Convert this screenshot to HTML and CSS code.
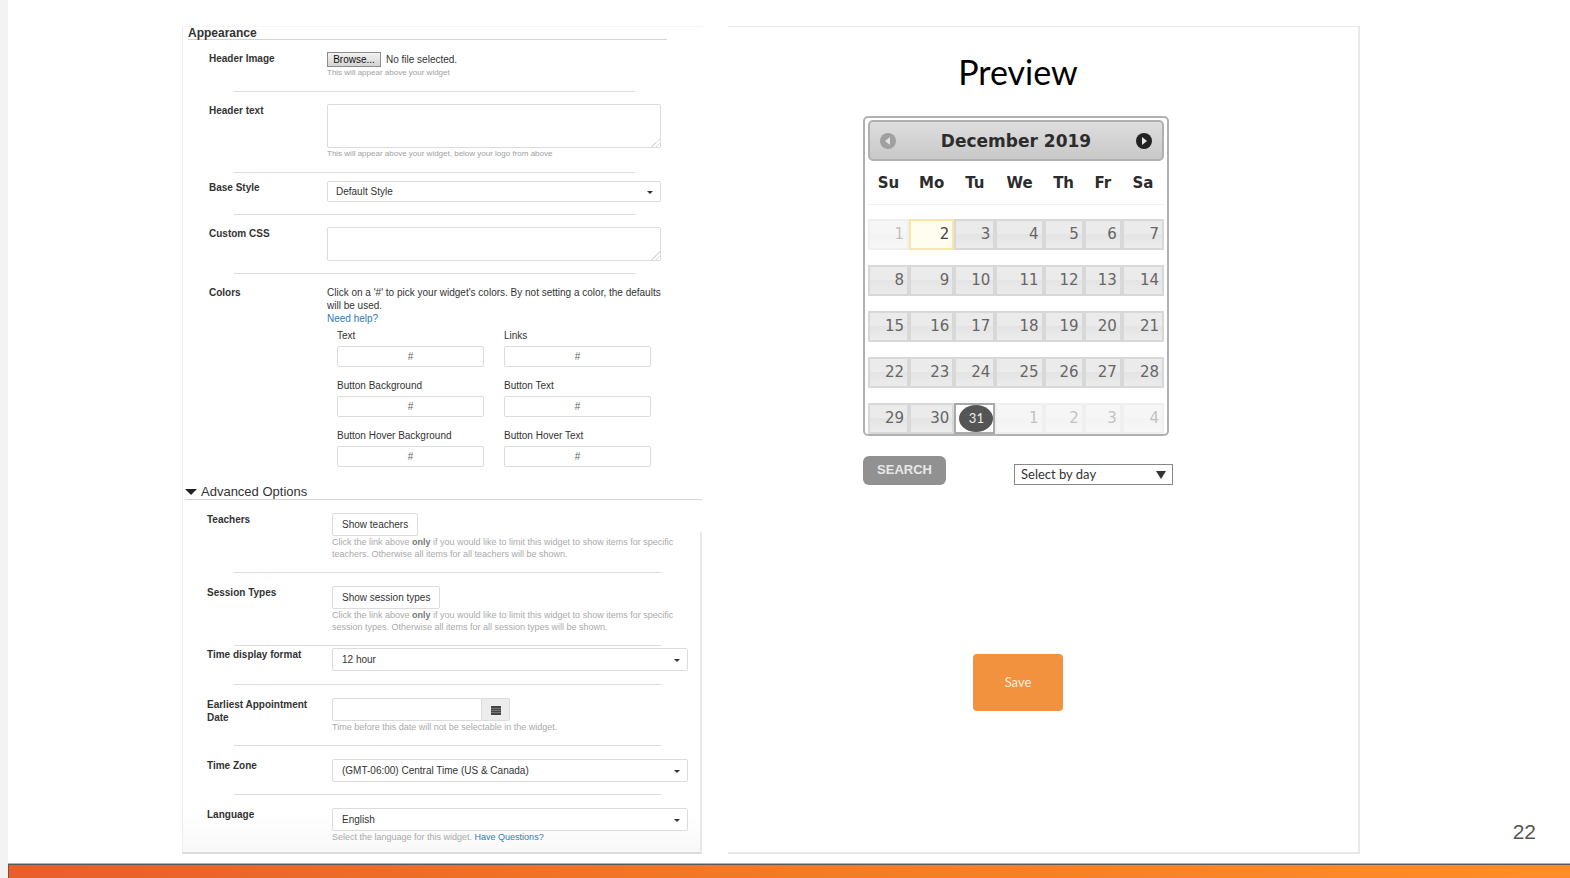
FILE: index.html
```html
<!DOCTYPE html>
<html lang="en">
<head>
<meta charset="utf-8">
<title>Widget settings</title>
<link rel="stylesheet" href="styles.css">
</head>
<body>
<div class="slide">
  <main class="stage">
    <form class="settings">
      <section class="appearance">
        <h2 class="section-title">Appearance</h2>
        <div class="row">
          <label class="name" for="header-image">Header Image</label>
          <div class="file">
            <span class="browse">Browse...</span><span>No file selected.</span>
            <input id="header-image" type="file">
          </div>
          <p class="help">This will appear above your widget</p>
        </div>
        <hr>
        <div class="row">
          <label class="name" for="header-text">Header text</label>
          <textarea id="header-text" class="area tall"></textarea>
          <p class="help">This will appear above your widget, below your logo from above</p>
        </div>
        <hr>
        <div class="row tight">
          <label class="name" for="base-style">Base Style</label>
          <div class="select"><select id="base-style"><option>Default Style</option></select></div>
        </div>
        <hr>
        <div class="row">
          <label class="name" for="custom-css">Custom CSS</label>
          <textarea id="custom-css" class="area"></textarea>
        </div>
        <hr>
        <div class="row colors-row">
          <span class="name">Colors</span>
          <div>
            <p class="intro">Click on a '#' to pick your widget's colors. By not setting a color, the defaults will be used.<br><a href="#">Need help?</a></p>
            <div class="colors">
              <label>Text<input type="text" placeholder="#"></label>
              <label>Links<input type="text" placeholder="#"></label>
              <label>Button Background<input type="text" placeholder="#"></label>
              <label>Button Text<input type="text" placeholder="#"></label>
              <label>Button Hover Background<input type="text" placeholder="#"></label>
              <label>Button Hover Text<input type="text" placeholder="#"></label>
            </div>
          </div>
        </div>
      </section>
      <section class="advanced">
        <h2 class="section-title"><svg width="12" height="6" viewBox="0 0 12 6"><path d="M0 0h12L6 6z" fill="#222"/></svg>Advanced Options</h2>
        <div class="fields">
          <div class="row">
            <span class="name">Teachers</span>
            <button class="plain" type="button">Show teachers</button>
            <p class="help">Click the link above <b>only</b> if you would like to limit this widget to show items for specific teachers. Otherwise all items for all teachers will be shown.</p>
          </div>
          <hr>
          <div class="row">
            <span class="name">Session Types</span>
            <button class="plain" type="button">Show session types</button>
            <p class="help">Click the link above <b>only</b> if you would like to limit this widget to show items for specific session types. Otherwise all items for all session types will be shown.</p>
          </div>
          <hr>
          <div class="row tight">
            <label class="name" for="time-format">Time display format</label>
            <div class="select"><select id="time-format"><option>12 hour</option></select></div>
          </div>
          <hr>
          <div class="row">
            <label class="name" for="earliest">Earliest Appointment Date</label>
            <div class="date">
              <input id="earliest" type="text">
              <button type="button" aria-label="Pick a date"><svg width="10" height="10" viewBox="0 0 10 10"><path d="M0 1h10v9H0z" fill="#444"/><path d="M0 3.5h10M0 5.5h10M0 7.5h10" stroke="#999" stroke-width=".6"/></svg></button>
            </div>
            <p class="help">Time before this date will not be selectable in the widget.</p>
          </div>
          <hr>
          <div class="row">
            <label class="name" for="time-zone">Time Zone</label>
            <div class="select"><select id="time-zone"><option>(GMT-06:00) Central Time (US &amp; Canada)</option></select></div>
          </div>
          <hr>
          <div class="row last">
            <label class="name" for="language">Language</label>
            <div class="select"><select id="language"><option>English</option></select></div>
            <p class="help">Select the language for this widget. <a href="#">Have Questions?</a></p>
          </div>
        </div>
      </section>
    </form>

    <section class="preview">
      <div class="preview-body">
        <h1>Preview</h1>
        <div class="calendar">
          <div class="month">
            <button type="button" aria-label="Previous month"><svg width="16" height="16" viewBox="0 0 16 16"><circle cx="8" cy="8" r="8" fill="#a0a0a0"/><path d="M10 4v8L5 8z" fill="#e2e2e2"/></svg></button>
            <strong>December 2019</strong>
            <button type="button" aria-label="Next month"><svg width="16" height="16" viewBox="0 0 16 16"><circle cx="8" cy="8" r="8" fill="#222"/><path d="M6 4v8l5-4z" fill="#e6e6e6"/></svg></button>
          </div>
          <table>
            <colgroup><col class="c1"><col class="c2"><col class="c1"><col class="c4"><col class="c5"><col class="c6"><col class="c7"></colgroup>
            <thead><tr><th>Su</th><th>Mo</th><th>Tu</th><th>We</th><th>Th</th><th>Fr</th><th>Sa</th></tr></thead>
            <tbody>
              <tr><td><button type="button" class="off">1</button></td><td><button type="button" class="today">2</button></td><td><button type="button">3</button></td><td><button type="button">4</button></td><td><button type="button">5</button></td><td><button type="button">6</button></td><td><button type="button">7</button></td></tr>
              <tr><td><button type="button">8</button></td><td><button type="button">9</button></td><td><button type="button">10</button></td><td><button type="button">11</button></td><td><button type="button">12</button></td><td><button type="button">13</button></td><td><button type="button">14</button></td></tr>
              <tr><td><button type="button">15</button></td><td><button type="button">16</button></td><td><button type="button">17</button></td><td><button type="button">18</button></td><td><button type="button">19</button></td><td><button type="button">20</button></td><td><button type="button">21</button></td></tr>
              <tr><td><button type="button">22</button></td><td><button type="button">23</button></td><td><button type="button">24</button></td><td><button type="button">25</button></td><td><button type="button">26</button></td><td><button type="button">27</button></td><td><button type="button">28</button></td></tr>
              <tr><td><button type="button">29</button></td><td><button type="button">30</button></td><td><button type="button" class="picked"><span>31</span></button></td><td><button type="button" class="off">1</button></td><td><button type="button" class="off">2</button></td><td><button type="button" class="off">3</button></td><td><button type="button" class="off">4</button></td></tr>
            </tbody>
          </table>
        </div>
        <div class="actions">
          <button class="search" type="button">SEARCH</button>
          <div class="day-select"><select aria-label="Select by day"><option>Select by day</option></select></div>
        </div>
        <button class="save" type="button">Save</button>
      </div>
    </section>
    <p class="page-number">22</p>
  </main>
  <footer class="band"></footer>
</div>
</body>
</html>
```
FILE: styles.css
```css
* { box-sizing: border-box; }
body {
  margin: 0;
  background: #f3f3f3;
  font: 10px/12px "Liberation Sans", Arial, sans-serif;
  color: #333;
}
h1, h2, p { margin: 0; }
button, input, select, textarea { font: inherit; color: inherit; margin: 0; }
a { color: #337ab7; text-decoration: none; }

.slide {
  min-height: 100vh;
  margin-left: 8px;
  background: #fff;
  display: flex;
  flex-direction: column;
}
.stage {
  flex: 1;
  display: grid;
  grid-template-columns: 174fr 520fr 26fr 632fr 210fr;
  padding: 26px 0 10px;
}
.band {
  height: 14px;
  border-top: 1px solid #5a5a5a;
  border-left: 1px solid #8a4a34;
  box-shadow: 0 -1px #b0b0b0;
  background: linear-gradient(90deg, #e85e2c, #f47a26 50%, #ff8d27);
}

/* Settings form */
.settings {
  grid-column: 2;
  border-left: 1px solid #ececec;
  border-bottom: 2px solid #dcdcdc;
  border-top: 1px solid #f6f6f6;
  background: linear-gradient(#fff 95%, #f8f8f8);
}
.appearance { margin: 0 35px 0 5px; }
.advanced { margin: 17px 0 0 2px; }
.section-title {
  font-size: 12px;
  line-height: 12px;
  border-bottom: 1px solid #d4d4d4;
}
.advanced .section-title {
  display: flex;
  align-items: center;
  gap: 4px;
  font-size: 13px;
  font-weight: normal;
  line-height: 15px;
}
.fields {
  padding-right: 14px;
  background: linear-gradient(#e8e8e8, #e8e8e8) no-repeat right 32px / 2px 100%;
}
.row {
  display: grid;
  grid-template-columns: 118px 1fr;
  padding: 12px 6px 12px 21px;
}
.row > * { grid-column: 2; }
.row > .name {
  grid-column: 1;
  grid-row: 1 / span 2;
  padding-right: 12px;
  font-weight: bold;
  line-height: 13px;
}
.row.tight { padding-top: 8px; }
.fields .row {
  grid-template-columns: 125px 1fr;
  padding: 13px 0 12px 22px;
}
.fields .row.tight { padding: 2px 0 13px 22px; }
.fields .row.last { padding-bottom: 8px; }
hr {
  border: 0;
  height: 1px;
  margin: 0 32px 0 46px;
  background: #dcdcdc;
}
.fields hr { margin: 0 27px 0 49px; }
.help { font-size: 8px; color: #a0a0a0; }
.fields .help { padding-right: 10px; font-size: 9px; color: #aaa; }
.help b { color: #777; }

.file { position: relative; display: flex; align-items: center; gap: 5px; }
.file input { position: absolute; inset: 0; width: 100%; opacity: 0; }
.browse {
  width: 54px;
  border: 1px solid #8c8c8c;
  background: linear-gradient(#f2f2f2, #d4d4d4);
  color: #111;
  text-align: center;
  line-height: 13px;
}
.area, .select select, .colors input, .date input, .plain {
  border: 1px solid #dcdcdc;
  border-radius: 2px;
  background: #fff;
}
.area { display: block; width: 100%; height: 34px; resize: vertical; }
.area.tall { height: 44px; }
.area::-webkit-resizer {
  background: linear-gradient(135deg, transparent 70%, #ddd 70% 75%, transparent 75% 85%, #ddd 85% 90%, transparent 90%);
}
.select { position: relative; }
.select select {
  display: block;
  width: 100%;
  height: 21px;
  padding: 0 8px;
  appearance: none;
}
.fields .select select { height: 23px; padding: 0 9px; }
.select::after, .day-select::after {
  content: "";
  position: absolute;
  right: 8px;
  top: calc(50% - 1px);
  border: 3px solid transparent;
  border-top-color: #333;
  border-bottom: 0;
  pointer-events: none;
}
.row.colors-row { padding-bottom: 0; }
.intro { line-height: 13px; }
.colors {
  display: grid;
  grid-template-columns: 1fr 1fr;
  gap: 13px 20px;
  margin: 5px 10px 0;
}
.colors input {
  display: block;
  width: 100%;
  height: 21px;
  margin-top: 4px;
  text-align: center;
}
.colors input::placeholder { color: #666; }
.plain { justify-self: start; height: 23px; padding: 0 9px; }
.date { display: flex; height: 23px; }
.date input { width: 150px; border-radius: 2px 0 0 2px; }
.date button {
  width: 28px;
  padding: 0;
  border: 1px solid #dcdcdc;
  border-left: 0;
  border-radius: 0 2px 2px 0;
  background: #ececec;
}
.date svg { display: block; margin: auto; }

/* Preview */
.preview {
  grid-column: 4;
  border: solid #e8e8e8;
  border-width: 1px 2px 2px 0;
  padding: 23px 0 0 135px;
}
.preview-body { width: 310px; }
h1 {
  font: 34px/44px Lato, sans-serif;
  color: #000;
  text-align: center;
}
.calendar {
  width: 306px;
  margin-top: 22px;
  padding: 2px 3px 0;
  border: 2px solid #b0b0b0;
  border-radius: 5px;
  font: 15px/18px "DejaVu Sans", sans-serif;
}
.month {
  display: flex;
  align-items: center;
  justify-content: space-between;
  height: 41px;
  padding: 0 10px;
  border: 2px solid #b0b0b0;
  border-radius: 5px;
  background: linear-gradient(#dedede, #c8c8c8);
  font-size: 17px;
  color: #2c2c2c;
}
.month button { padding: 0; border: 0; background: none; }
.month svg { display: block; }
.calendar table { width: 100%; table-layout: fixed; border-collapse: collapse; }
.c1 { width: 41px; }
.c2 { width: 45px; }
.c4 { width: 48px; }
.c5 { width: 40px; }
.c6 { width: 38px; }
.c7 { width: 42px; }
th { height: 43px; padding: 2px 0 0; border-bottom: 1px solid #f2f2f2; color: #2c2c2c; }
td { padding: 15px 0 0; }
tbody tr:first-child td { padding-top: 14px; }
td button {
  display: block;
  width: 100%;
  height: 31px;
  padding: 0 3px;
  border: 2px solid #d8d8d8;
  background: linear-gradient(#ebebeb 50%, #e4e4e4 50%, #ececec);
  color: #666;
  text-align: right;
}
td .off { opacity: .4; }
td .today { border-color: #f8e8a8; background: #fffcf0; color: #444; }
td .picked { padding: 0; border-color: #aaa; background: #fff; }
.picked span {
  display: block;
  width: 34px;
  margin-left: auto;
  border-radius: 50%;
  background: #555;
  color: #eee;
  font: 13px/27px Lato, sans-serif;
  text-align: center;
}
.actions {
  display: flex;
  justify-content: space-between;
  align-items: flex-end;
  margin-top: 20px;
}
.search {
  width: 83px;
  height: 29px;
  padding: 0;
  border: 0;
  border-radius: 6px;
  background: #919191;
  color: #e8e8e8;
  font-size: 13px;
  font-weight: bold;
}
.day-select { position: relative; width: 159px; }
.day-select select {
  display: block;
  width: 100%;
  height: 21px;
  padding: 0 6px;
  appearance: none;
  border: 1px solid #888;
  border-radius: 0;
  background: #fff;
  font: 13px/18px Lato, sans-serif;
}
.day-select::after {
  right: 7px;
  top: 7px;
  border-width: 8px 5px 0;
}
.save {
  display: block;
  width: 90px;
  height: 57px;
  margin: 169px auto 0;
  border: 0;
  border-radius: 4px;
  background: #f3923e;
  color: #fdeedd;
  font: 13px/18px Lato, sans-serif;
}
.page-number {
  align-self: end;
  padding: 0 34px 10px 0;
  font-size: 21px;
  line-height: 24px;
  color: #555;
  text-align: right;
}
```
